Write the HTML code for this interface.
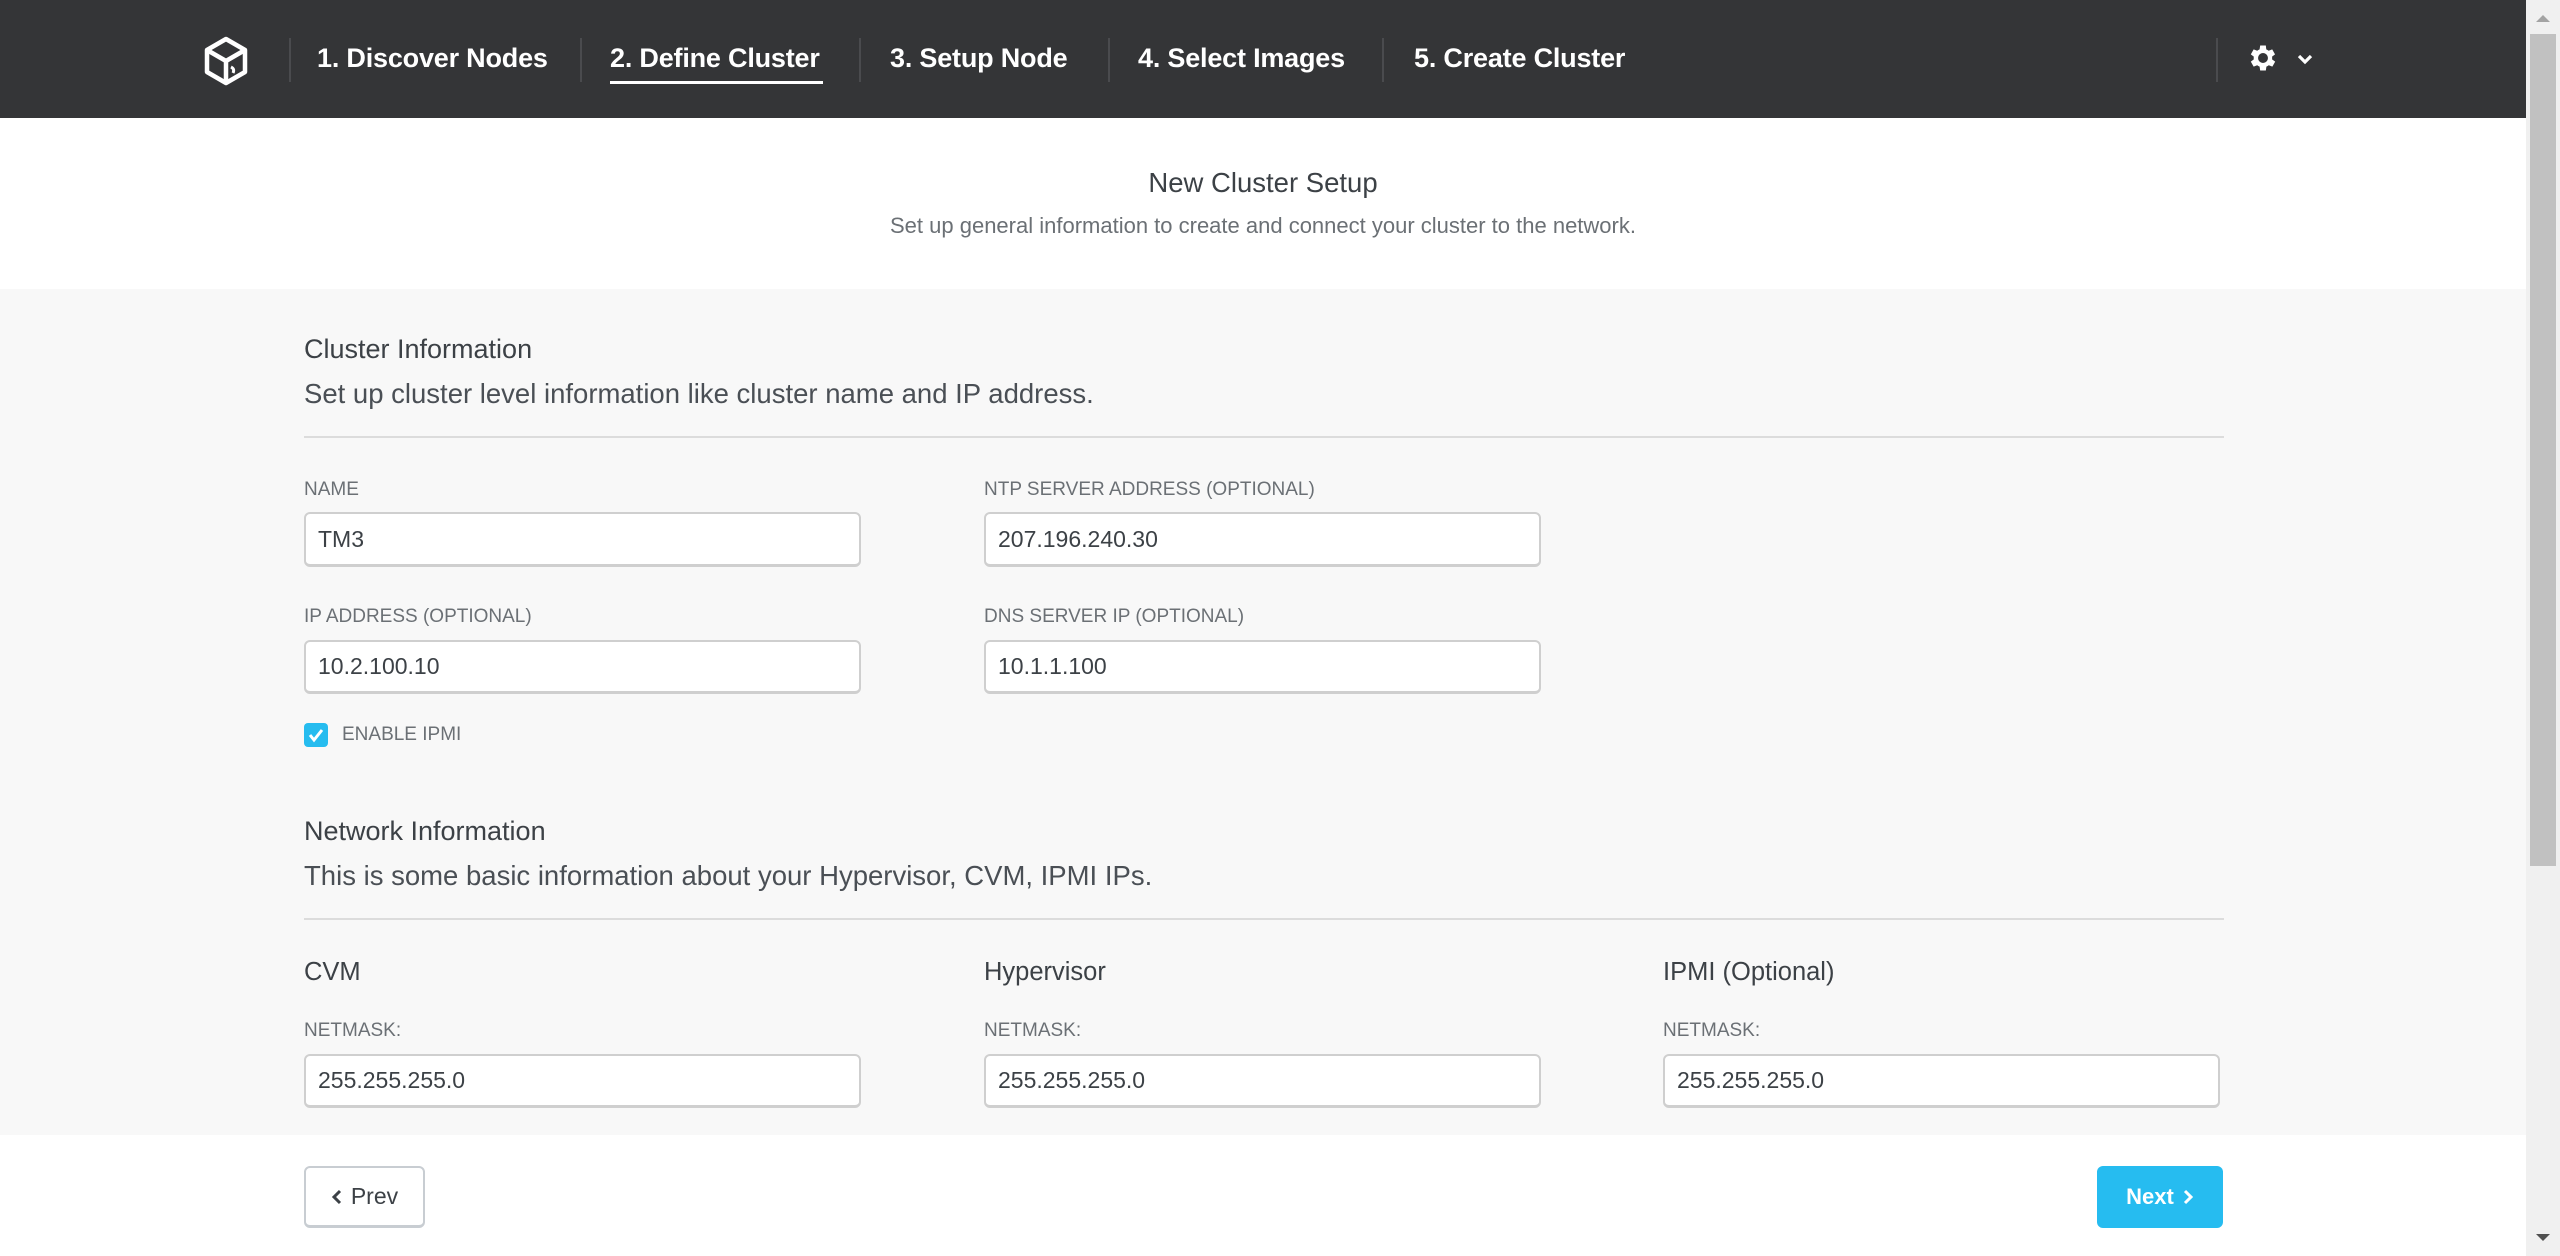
<!DOCTYPE html>
<html><head><meta charset="utf-8"><style>
*{margin:0;padding:0;box-sizing:border-box}
body{width:2560px;height:1256px;overflow:hidden;background:#fff;font-family:"Liberation Sans",sans-serif;position:relative;color:#3c4146}
.abs{position:absolute}
#hdr{left:0;top:0;width:2526px;height:118px;background:#343537}
.nav{position:absolute;top:39px;color:#fff;font-weight:bold;font-size:27px;letter-spacing:-0.2px;white-space:nowrap;line-height:38px}
.sep{position:absolute;top:38px;width:2px;height:44px;background:#4a4b4e}
#gray{left:0;top:289px;width:2526px;height:846px;background:#f8f8f8}
.h{position:absolute;font-size:27px;color:#3c4146;white-space:nowrap}
.sub{position:absolute;font-size:27.5px;color:#4a4f55;white-space:nowrap}
.lbl{position:absolute;font-size:19px;color:#6b7075;white-space:nowrap}
.inp{position:absolute;background:#fff;border:2px solid #cfcfcf;border-bottom-width:3px;border-radius:6px;font-size:23px;color:#3c4146;padding-left:12px;display:flex;align-items:center}
.div{position:absolute;left:304px;width:1920px;height:2px;background:#dcdcdc}
</style></head><body>
<div id="hdr" class="abs"></div>
<svg class="abs" style="left:203px;top:36px" width="46" height="50" viewBox="0 0 46 50"><path d="M23 3 L42 14 L42 36 L23 47 L4 36 L4 14 Z" fill="none" stroke="#fff" stroke-width="4.5" stroke-linejoin="round"/><path d="M4 14 L23 25 L42 14 M23 25 L23 47" fill="none" stroke="#fff" stroke-width="4.5" stroke-linejoin="round"/><path d="M28 31 Q32 33 30 37" fill="none" stroke="#fff" stroke-width="3"/></svg>
<div class="sep" style="left:289px"></div>
<div class="nav" style="left:317px">1. Discover Nodes</div>
<div class="sep" style="left:580px"></div>
<div class="nav" style="left:610px">2. Define Cluster</div>
<div class="abs" style="left:610px;top:81px;width:213px;height:3px;background:#fff"></div>
<div class="sep" style="left:859px"></div>
<div class="nav" style="left:890px">3. Setup Node</div>
<div class="sep" style="left:1108px"></div>
<div class="nav" style="left:1138px">4. Select Images</div>
<div class="sep" style="left:1382px"></div>
<div class="nav" style="left:1414px">5. Create Cluster</div>
<div class="sep" style="left:2216px"></div>
<svg class="abs" style="left:2246px;top:41px" width="34" height="34" viewBox="0 0 24 24"><path fill="#fff" d="M19.4 13a7.5 7.5 0 0 0 0-2l2.1-1.6-2-3.5-2.5 1a7.4 7.4 0 0 0-1.7-1L15 3.2h-4l-.4 2.7a7.4 7.4 0 0 0-1.7 1l-2.5-1-2 3.5L6.5 11a7.5 7.5 0 0 0 0 2l-2.1 1.6 2 3.5 2.5-1a7.4 7.4 0 0 0 1.7 1l.4 2.7h4l.4-2.7a7.4 7.4 0 0 0 1.7-1l2.5 1 2-3.5zM13 15.5a3.5 3.5 0 1 1 0-7 3.5 3.5 0 0 1 0 7z" transform="translate(-1 0)"/></svg>
<svg class="abs" style="left:2297px;top:53px" width="16" height="12" viewBox="0 0 16 12"><path d="M2 3 L8 9 L14 3" fill="none" stroke="#fff" stroke-width="3.2"/></svg>

<div class="abs" style="left:0;width:2526px;top:167px;text-align:center;font-size:27.5px;color:#3c4146">New Cluster Setup</div>
<div class="abs" style="left:0;width:2526px;top:213px;text-align:center;font-size:22px;color:#6b7075">Set up general information to create and connect your cluster to the network.</div>

<div id="gray" class="abs"></div>
<div class="h" style="left:304px;top:334px">Cluster Information</div>
<div class="sub" style="left:304px;top:378px">Set up cluster level information like cluster name and IP address.</div>
<div class="div" style="top:436px"></div>
<div class="lbl" style="left:304px;top:479px">NAME</div>
<div class="lbl" style="left:984px;top:479px">NTP SERVER ADDRESS (OPTIONAL)</div>
<div class="inp" style="left:304px;top:512px;width:557px;height:55px">TM3</div>
<div class="inp" style="left:984px;top:512px;width:557px;height:55px">207.196.240.30</div>
<div class="lbl" style="left:304px;top:606px">IP ADDRESS (OPTIONAL)</div>
<div class="lbl" style="left:984px;top:606px">DNS SERVER IP (OPTIONAL)</div>
<div class="inp" style="left:304px;top:640px;width:557px;height:54px">10.2.100.10</div>
<div class="inp" style="left:984px;top:640px;width:557px;height:54px">10.1.1.100</div>
<div class="abs" style="left:304px;top:723px;width:24px;height:24px;border-radius:4px;background:#26bcef"></div>
<svg class="abs" style="left:304px;top:723px" width="24" height="24" viewBox="0 0 24 24"><path d="M6 12 L10 17 L18 7" fill="none" stroke="#fff" stroke-width="3"/></svg>
<div class="lbl" style="left:342px;top:724px">ENABLE IPMI</div>

<div class="h" style="left:304px;top:816px">Network Information</div>
<div class="sub" style="left:304px;top:860px">This is some basic information about your Hypervisor, CVM, IPMI IPs.</div>
<div class="div" style="top:918px"></div>
<div class="h" style="left:304px;top:958px;font-size:25.5px">CVM</div>
<div class="h" style="left:984px;top:958px;font-size:25.5px">Hypervisor</div>
<div class="h" style="left:1663px;top:958px;font-size:25.5px">IPMI (Optional)</div>
<div class="lbl" style="left:304px;top:1020px">NETMASK:</div>
<div class="lbl" style="left:984px;top:1020px">NETMASK:</div>
<div class="lbl" style="left:1663px;top:1020px">NETMASK:</div>
<div class="inp" style="left:304px;top:1054px;width:557px;height:54px">255.255.255.0</div>
<div class="inp" style="left:984px;top:1054px;width:557px;height:54px">255.255.255.0</div>
<div class="inp" style="left:1663px;top:1054px;width:557px;height:54px">255.255.255.0</div>

<div class="abs" style="left:304px;top:1166px;width:121px;height:62px;background:#fff;border:2px solid #c8cdd2;border-bottom-width:3px;border-radius:6px;font-size:23px;color:#3c4146;display:flex;align-items:center;justify-content:center">
<svg width="12" height="16" viewBox="0 0 12 16" style="margin-right:8px"><path d="M9 2 L3 8 L9 14" fill="none" stroke="#3c4146" stroke-width="3"/></svg>Prev</div>
<div class="abs" style="left:2097px;top:1166px;width:126px;height:62px;background:#26bcf0;border-radius:6px;font-size:22px;color:#fff;font-weight:bold;display:flex;align-items:center;justify-content:center">Next<svg width="12" height="16" viewBox="0 0 12 16" style="margin-left:8px"><path d="M3 2 L9 8 L3 14" fill="none" stroke="#fff" stroke-width="3"/></svg></div>

<div class="abs" style="left:2526px;top:0;width:34px;height:1256px;background:#f0f0f0"></div>
<svg class="abs" style="left:2535px;top:12px" width="16" height="12" viewBox="0 0 16 12"><path d="M1 10 L8 3 L15 10Z" fill="#a3a3a3"/></svg>
<div class="abs" style="left:2530px;top:34px;width:26px;height:832px;background:#c1c1c1"></div>
<svg class="abs" style="left:2535px;top:1232px" width="16" height="12" viewBox="0 0 16 12"><path d="M1 2 L8 9 L15 2Z" fill="#505050"/></svg>
</body></html>
